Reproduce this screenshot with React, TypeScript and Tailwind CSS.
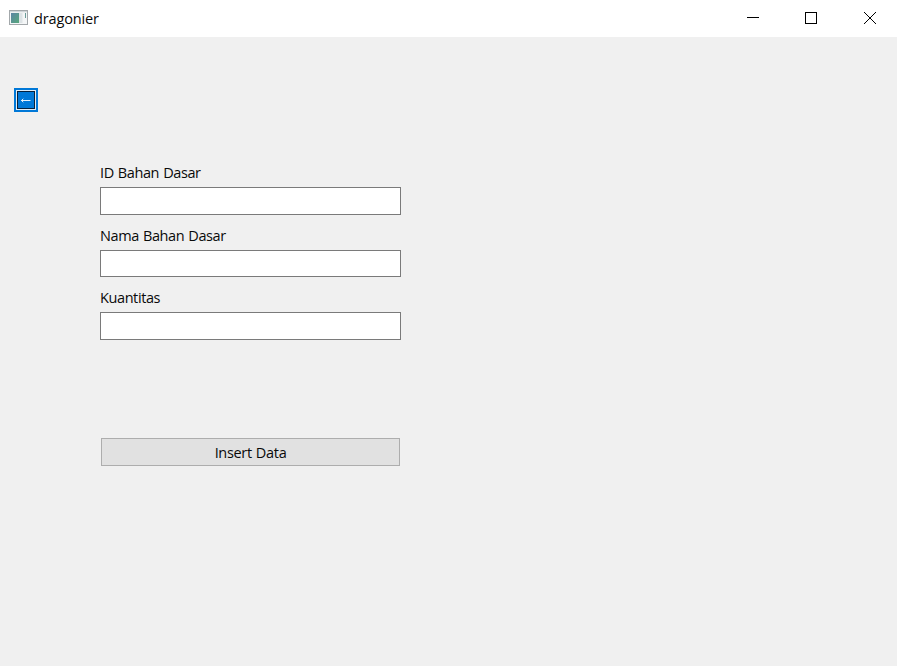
import React from "react";

function AppIcon() {
  return (
    <svg width="19" height="16" viewBox="0 0 19 16" className="shrink-0">
      <defs>
        <linearGradient id="pane" x1="0" y1="0" x2="1" y2="1">
          <stop offset="0" stopColor="#5c84a4" />
          <stop offset="1" stopColor="#57a87c" />
        </linearGradient>
      </defs>
      <rect x="0.5" y="0.5" width="18" height="14" fill="#f4f6f7" stroke="#a3a8ab" />
      <rect x="1" y="1" width="17" height="1.2" fill="#cfd5d8" />
      <rect x="2" y="3" width="8" height="10" fill="url(#pane)" />
      <rect x="10" y="3" width="3.5" height="10" fill="#dde3e6" />
      <rect x="16" y="3" width="1" height="5" fill="#6b9c98" />
    </svg>
  );
}

function TitleBar() {
  return (
    <header className="flex h-[37px] shrink-0 items-start bg-white">
      <div className="flex flex-1 items-start pl-[9px] pt-[10px]">
        <AppIcon />
        <span className="-mt-[1px] ml-[6px] text-[14.5px] leading-5 tracking-[-0.15px]">dragonier</span>
      </div>
      <svg width="58" height="37" viewBox="0 0 58 37" stroke="#000" fill="none">
        <path d="M23 17.5h12" />
      </svg>
      <svg width="58" height="37" viewBox="0 0 58 37" stroke="#000" fill="none">
        <rect x="23.5" y="12.5" width="11" height="11" />
      </svg>
      <svg width="57" height="37" viewBox="0 0 57 37" stroke="#000" strokeWidth="1" fill="none">
        <path d="M24 12l12 12M36 12L24 24" />
      </svg>
    </header>
  );
}

function Field({ label, id, box }: { label: string; id: string; box: string }) {
  return (
    <div className="flex flex-col">
      <label htmlFor={id} className="block h-[24px] self-start whitespace-nowrap text-[14.5px] leading-5 tracking-[-0.4px] [word-spacing:0.7px]">
        {label}
      </label>
      <input id={id} className={`w-full border border-[#7a7a7a] bg-white outline-none ${box}`} />
    </div>
  );
}

export default function App() {
  return (
    <div className="flex h-[666px] w-[897px] flex-col overflow-hidden bg-[#f0f0f0] font-['Open_Sans','Noto_Sans',sans-serif] text-[#0a0a0a]">
      <TitleBar />
      <main className="flex flex-1 flex-col items-start">
        <button
          aria-label="Back"
          className="ml-[14px] mt-[51px] h-6 w-6 border-2 border-[#0078d7] bg-[#e2edf7] p-px"
        >
          <span className="flex h-[18px] w-[18px] items-center justify-center border border-[#06213c] bg-[#0078d7]">
            <svg width="16" height="16" viewBox="0 0 16 16" fill="none" stroke="#fff">
              <path d="M3.5 8.5h9" strokeWidth="0.9" />
              <path d="M5.3 6.8L3.5 8.5L5.3 10.2" strokeWidth="0.9" />
            </svg>
          </span>
        </button>
        <form className="ml-[100px] mt-[51px] flex w-[301px] flex-col">
          <div className="flex flex-col gap-[11px]">
            <Field id="idBahan" label="ID Bahan Dasar" box="h-[28px]" />
            <Field id="namaBahan" label="Nama Bahan Dasar" box="h-[27px]" />
            <Field id="kuantitas" label="Kuantitas" box="h-[28px]" />
          </div>
          <button
            type="button"
            className="mx-px mt-[98px] flex h-[28px] items-center justify-center border border-[#adadad] bg-[#e1e1e1] pt-[2px] text-[14.5px] leading-5 tracking-[-0.33px] [word-spacing:0.7px]"
          >
            Insert Data
          </button>
        </form>
      </main>
    </div>
  );
}
